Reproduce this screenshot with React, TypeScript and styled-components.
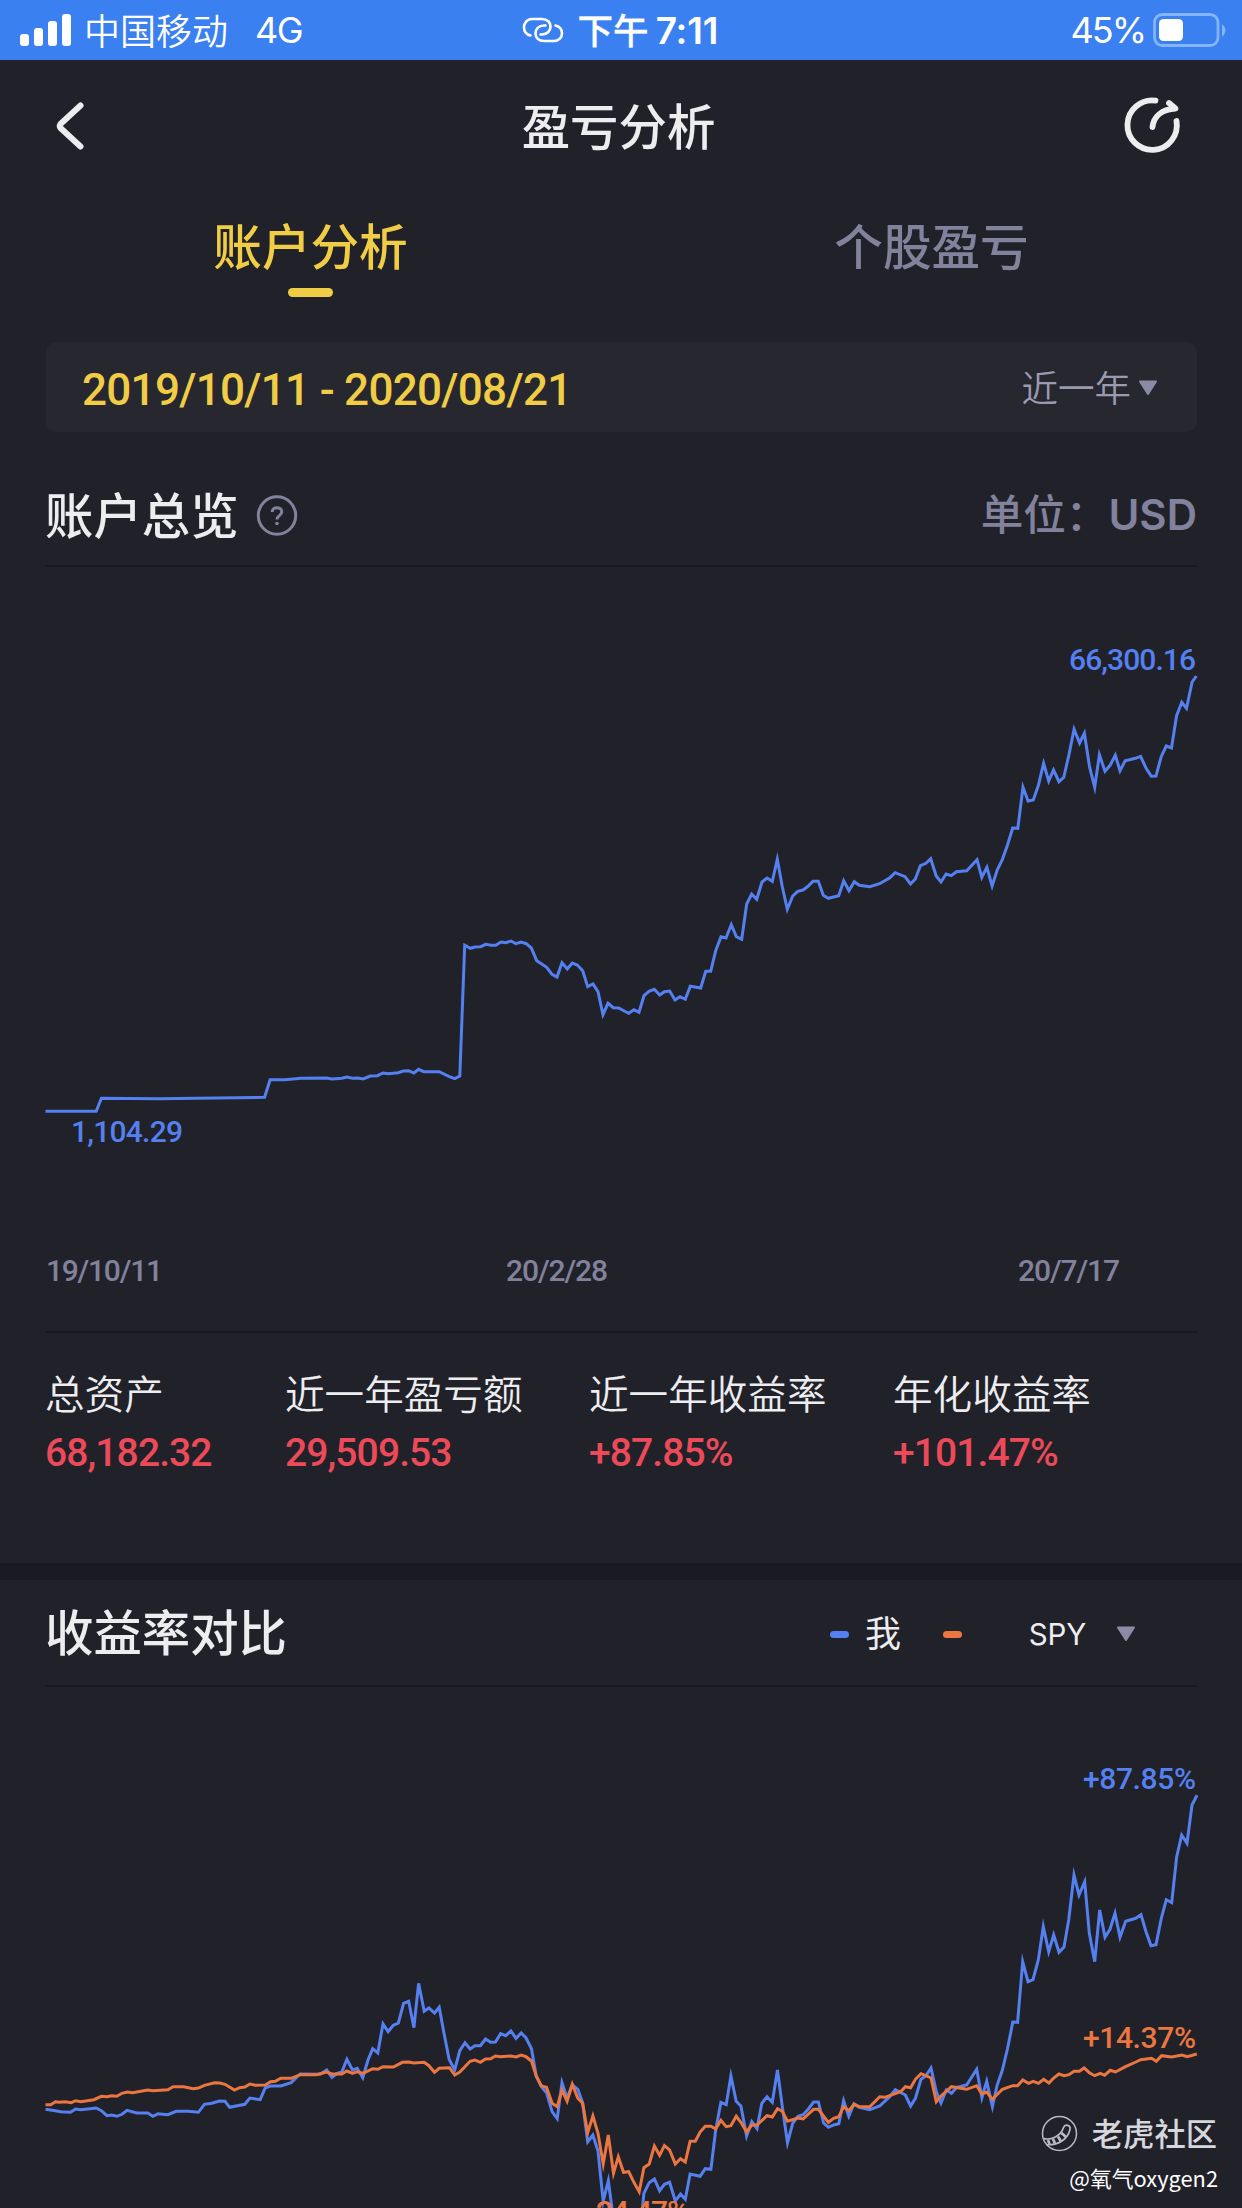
import React from "react";
import styled, { createGlobalStyle } from "styled-components";

const cjk = `"Noto Sans CJK SC", sans-serif`;
const uiFont = `Inter, ${cjk}`;
const numFont = `Roboto, ${cjk}`;

const color = {
  page: "#21212a",
  panel: "#272730",
  band: "#1a1a23",
  line: "#181820",
  text: "#ededf0",
  muted: "#82829c",
  accent: "#f0cd45",
  blue: "#5580f0",
  orange: "#ec7640",
  red: "#ec4a58",
  status: "#3a80f1",
};

const GlobalStyle = createGlobalStyle`
  * { box-sizing: border-box; }
  body { margin: 0; background: ${color.page}; }
`;

const Screen = styled.main`
  position: relative;
  width: 1242px;
  height: 2208px;
  overflow: hidden;
  display: flex;
  flex-direction: column;
  background: ${color.page};
  color: ${color.text};
  font-family: ${uiFont};
  white-space: nowrap;
`;

const StatusBar = styled.header`
  display: grid;
  grid-template-columns: 1fr auto 1fr;
  align-items: center;
  height: 60px;
  padding: 0 16px 0 20px;
  background: ${color.status};
  color: #fff;
  font-size: 36px;
  line-height: 60px;
`;

const StatusGroup = styled.div<{ $end?: boolean }>`
  display: flex;
  align-items: center;
  justify-content: ${(p) => (p.$end ? "flex-end" : "flex-start")};
  height: 60px;
`;

const Signal = styled.div`
  display: flex;
  align-items: flex-end;
  gap: 5px;
  width: 52px;
  height: 32px;
  margin-right: 12px;
`;

const SignalBar = styled.i<{ $h: number }>`
  width: 9px;
  height: ${(p) => p.$h}px;
  border-radius: 3px;
  background: #fff;
`;

const Carrier = styled.span`
  font: 350 36px/58px ${cjk};
  height: 60px;
  margin-right: 27px;
`;

const Network = styled.span`
  font-size: 36px;
  line-height: 62px;
  letter-spacing: -1.5px;
`;

const Clock = styled.span`
  display: flex;
  gap: 7px;
  margin: 0 6px 0 14px;
  height: 60px;
  font: 500 35.5px/58px ${cjk};
  -webkit-text-stroke: 0.3px currentColor;
  b {
    font: 600 37px/62px Inter, sans-serif;
    letter-spacing: -0.1px;
    -webkit-text-stroke: 0;
  }
`;

const Percent = styled.span`
  font-size: 36px;
  line-height: 62px;
  letter-spacing: -2px;
  margin-right: 7px;
`;

const Nav = styled.nav`
  display: grid;
  grid-template-columns: 60px 1fr 60px;
  align-items: center;
  height: 132px;
  padding: 0 59px 0 52px;
`;

const Title = styled.h1`
  margin: 0 0 5px 2px;
  text-align: center;
  font: 500 48.4px/70px ${cjk};
`;

const Tabs = styled.div`
  display: grid;
  grid-template-columns: 1fr 1fr;
  height: 150px;
  padding-top: 17px;
`;

const Tab = styled.div<{ $active?: boolean }>`
  display: flex;
  flex-direction: column;
  align-items: center;
  font: 500 48.6px/70px ${cjk};
  color: ${(p) => (p.$active ? color.accent : color.muted)};
  &::after {
    content: "";
    width: 45px;
    height: 9px;
    margin-top: 9px;
    border-radius: 5px;
    background: ${(p) => (p.$active ? color.accent : "transparent")};
  }
`;

const FilterBar = styled.div`
  display: flex;
  align-items: center;
  justify-content: space-between;
  height: 90px;
  margin: 0 45px 0 46px;
  padding: 0 39px 0 36px;
  border-radius: 10px;
  background: ${color.panel};
`;

const DateRange = styled.span`
  padding-top: 5px;
  font: 500 44px/60px ${numFont};
  letter-spacing: -0.7px;
  color: ${color.accent};
`;

const Period = styled.span`
  display: flex;
  align-items: center;
  gap: 7px;
  font: 350 36.5px/60px ${cjk};
  color: #9a9ab0;
  svg {
    margin-top: 2px;
  }
`;

const SectionHead = styled.div<{ $h: number; $pt?: number }>`
  display: flex;
  align-items: center;
  justify-content: space-between;
  height: ${(p) => p.$h}px;
  margin: 0 45px;
  padding-top: ${(p) => p.$pt ?? 0}px;
  border-bottom: 2px solid ${color.line};
`;

const Heading = styled.h2`
  display: flex;
  align-items: center;
  gap: 17px;
  margin: 0;
  font: 500 48.4px/70px ${cjk};
  span {
    padding-bottom: 6px;
  }
`;

const Unit = styled.span`
  padding-bottom: 5px;
  font: 500 42.6px/60px ${cjk};
  color: ${color.muted};
  b {
    font: 600 42px/60px Inter, sans-serif;
  }
`;

const ChartSvg = styled.svg`
  display: block;
  flex: none;
  font-family: ${numFont};
  font-size: 30px;
  font-weight: 500;
  font-stretch: 88%;
`;

const Line = styled.polyline<{ $c: string }>`
  fill: none;
  stroke: ${(p) => p.$c};
  stroke-width: 3;
  stroke-linejoin: miter;
  stroke-miterlimit: 6;
`;

const Stats = styled.dl`
  display: grid;
  grid-template-columns: 240px 304px 304px 1fr;
  height: 232px;
  margin: 0 45px;
  padding-top: 29px;
  border-top: 2px solid ${color.line};
`;

const StatLabel = styled.dt`
  font: 350 39.6px/60px ${cjk};
`;

const StatValue = styled.dd`
  margin: 0;
  padding-top: 2px;
  font: 500 39px/58px ${numFont};
  letter-spacing: -0.9px;
  color: ${color.red};
`;

const Band = styled.div`
  height: 17px;
  background: ${color.band};
`;

const Legend = styled.div`
  display: flex;
  align-items: center;
  padding: 3px 61px 0 0;
`;

const Dash = styled.i<{ $c: string }>`
  width: 19px;
  height: 7px;
  border-radius: 4px;
  background: ${(p) => p.$c};
`;

const LegendText = styled.span<{ $l: number; $r: number; $size: number }>`
  margin: 0 ${(p) => p.$r}px 0 ${(p) => p.$l}px;
  font-size: ${(p) => p.$size}px;
  line-height: 50px;
  letter-spacing: -0.2px;
`;

const Watermark = styled.div`
  position: absolute;
  right: 24px;
  bottom: 11px;
  display: flex;
  flex-direction: column;
  align-items: flex-end;
  color: #d6d7dc;
`;

const Brand = styled.div`
  display: flex;
  align-items: center;
  gap: 14px;
  padding-right: 1px;
  font: 500 31.3px/46px ${cjk};
  margin-bottom: 3px;
`;

const Author = styled.div`
  font: 400 21.8px/38px ${cjk};
  color: #fff;
`;

/* Converts a block of packed "x,y" pairs to canvas points. */
const block = (ox: number, oy: number, sx: number, packed: string) =>
  packed
    .trim()
    .split(/\s+/)
    .map((pair) => {
      const [x, y] = pair.split(",").map(Number);
      return `${(ox + x / sx).toFixed(1)},${(oy + y / 3).toFixed(1)}`;
    })
    .join(" ");

const assets = [
  block(0, 900, 2.525, `115,634 243,634 256,595 400,596 500,595 668,592 682,539 720,539 760,535 825,534 838,537 863,535 876,531 890,535
  903,534 917,537 935,528 953,527 967,519 980,521 1006,518 1018,513 1032,512 1045,519 1057,508 1070,515 1109,515 1133,529 1148,536 1161,528`),
  block(440, 820, 3, `74,376 91,385 105,381 122,380 137,373 153,376 167,376 183,366 197,368 213,363 228,371 243,366 259,371 274,384 290,422
  305,432 320,442 336,463 351,471 366,428 382,447 397,429 412,435 428,452 443,500 459,492 474,515 489,584 504,550 520,563 536,564 551,572
  566,580 582,569 597,577 612,527 627,514 643,508 659,525 673,515 689,513 705,540 720,530 736,538 751,499 782,504 797,454 812,454 827,392
  843,350 858,354 874,314 889,350 905,358 920,252 935,222 950,238 966,186 981,174 997,184 1012,118 1027,200 1042,268 1058,228 1073,214
  1089,210 1104,199 1119,184 1135,184 1150,226 1165,235 1196,227 1211,182 1227,212 1243,185 1258,196 1289,200`),
  block(621, 640, 2.525, `653,731 679,713 692,698 717,710 731,732 743,717 756,677 770,670 782,656 796,708 808,726 821,702 834,707 847,695
  873,692 899,659 911,712 924,682 937,738 950,690 963,658 976,615 989,564 1002,565 1015,442 1028,483 1041,480 1054,436 1067,370 1080,423
  1092,390 1106,425 1118,412 1131,345 1144,268 1158,309 1170,280 1183,380 1196,442 1208,344 1222,394 1235,376 1248,346 1260,392 1273,362
  1299,355 1312,349 1326,385 1339,409 1351,408 1364,350 1377,318 1390,324 1403,227 1416,187 1428,205 1442,126 1453,108`),
].join(" ");

const mine = [
  block(0, 1940, 2.525, `115,508 140,512 153,515 178,517 191,507 204,509 243,504 256,512 270,527 282,525 295,529 308,523 321,511 345,519
  373,519 386,529 399,521 424,524 445,514 475,514 501,517 516,493 535,490 554,483 568,484 580,502 618,493 631,474 657,479 670,443 683,438
  709,438 735,428 758,402 808,403 825,390 838,412 850,401 863,396 876,358 890,390 902,385 916,413 929,361 941,326 954,339 967,252 980,275
  993,256 1006,249 1019,190 1032,184 1045,263 1057,130 1071,214 1083,204 1097,219 1109,202 1121,280 1134,358 1148,390 1161,332 1174,308
  1187,327 1199,317 1213,317 1226,297 1239,307 1251,306 1264,281 1277,287 1290,273 1303,295 1316,279 1328,293 1342,326 1354,408 1367,440
  1380,458 1394,515 1407,536 1419,428 1432,475 1445,434 1459,448 1471,488 1484,606 1497,585 1510,633 1523,784 1536,722 1548,830`),
  block(560, 1940, 2.299, `182,900 193,760 205,728 217,717 229,752 240,733 252,727 265,783 277,762 288,778 299,702 322,709 334,686 347,688
  358,570 370,487 382,494 393,408 405,484 416,498 429,588 441,545 453,566 464,490 476,470 488,487 500,390 511,500 523,608 535,550 547,529
  559,524 571,507 583,486 594,486 606,549 617,562 629,555 641,551 652,482 664,529 676,491 688,502 712,509 735,498 758,470 771,449 794,465
  806,498 817,475 830,418 841,408 853,384 865,455 876,489 888,450 900,460 912,442 935,435 958,388 970,473 981,424 994,500 1005,436
  1017,390 1029,325 1041,246 1052,247`),
  block(850, 1720, 3, `518,725 534,785 549,779 565,720 580,620 596,695 611,645 627,697 642,681 656,600 672,465 687,525 704,485 718,640
  734,725 749,570 765,652 780,628 795,580 810,652 827,604 857,595 873,584 888,635 903,677 918,674 934,595 949,539 965,548 980,410 995,345
  1011,370 1026,255 1041,226`),
].join(" ");

const spy = [
  block(0, 1940, 2.525, `115,494 128,494 140,485 150,487 165,485 180,488 191,482 204,485 237,479 256,469 270,470 282,467 295,469 308,460
  321,456 335,458 373,450 386,452 424,449 437,440 463,440 488,446 501,444 516,436 542,428 555,429 568,433 592,450 605,443 618,441 631,432
  645,436 670,435 683,425 695,424 709,415 735,415 758,404 799,404 825,396 838,402 863,402 876,393 890,400 902,395 916,400 941,386 954,388
  967,380 993,381 1016,367 1032,366 1045,369 1071,367 1083,377 1097,397 1109,385 1135,383 1148,405 1161,396 1187,364 1199,360 1213,367
  1226,357 1239,356 1251,348 1264,350 1290,348 1303,351 1316,345 1328,350 1342,363 1354,408 1367,438 1380,442 1394,490 1407,500 1419,450
  1432,484 1445,433 1459,475 1471,490 1484,578 1497,528 1510,580 1523,672`),
  block(560, 1940, 2.299, `111,585 123,700 134,650 146,697 158,695 170,727 182,755 193,683 205,672 217,618 229,646 240,617 252,630 265,672
  277,656 288,666 299,604 311,604 322,576 334,559 347,559 358,567 370,541 382,560 393,557 405,529 416,547 429,576 441,555 453,555 476,527
  488,531 500,506 511,514 523,544 547,534 559,537 583,508 594,508 617,547 629,535 641,530 652,500 664,512 676,493 688,500 712,500 735,470
  747,472 783,455 794,440 806,443 817,418 830,401 841,407 853,414 865,485 876,468 900,440 935,448 958,437 970,462 981,456 994,478
  1017,448 1041,437 1052,437 1064,420 1077,430 1088,424 1100,430 1112,418 1124,429 1135,414 1147,402 1159,407 1170,404 1182,394 1194,394
  1205,384 1217,398 1229,407 1242,400 1252,406 1265,391 1277,396 1300,380 1324,366 1335,359 1360,355 1371,364 1383,347 1406,351 1430,345
  1442,350 1464,342`),
].join(" ");

const stats = [
  ["总资产", "68,182.32"],
  ["近一年盈亏额", "29,509.53"],
  ["近一年收益率", "+87.85%"],
  ["年化收益率", "+101.47%"],
];

const Triangle = () => (
  <svg width="20" height="16" viewBox="0 0 20 16">
    <path d="M2 1.5H18L10 14Z" fill="#8b8ba6" stroke="#8b8ba6" strokeWidth="2" strokeLinejoin="round" />
  </svg>
);

export default function App() {
  return (
    <Screen>
      <GlobalStyle />
      <StatusBar>
        <StatusGroup>
          <Signal>
            {[12, 18, 25, 32].map((h) => (
              <SignalBar key={h} $h={h} />
            ))}
          </Signal>
          <Carrier>中国移动</Carrier>
          <Network>4G</Network>
        </StatusGroup>
        <StatusGroup>
          <svg width="42" height="26" viewBox="0 0 42 26" fill="none" stroke="#fff" strokeWidth="2.6" strokeLinecap="round">
            <path d="M8.500 18.500C4.500 17.500 2 14.300 2 10.200S5 2 10 2H20C25.500 2 28.500 5.500 28.500 9.500S25.500 17.500 20 17.500H18.500" />
            <path d="M33.500 8.500C37.500 9.500 40 12.200 40 16.300S37 24 32 24H22C16.500 24 13.500 20.700 13.500 16.500S16.500 8.500 22 8.500H23.500" />
          </svg>
          <Clock>
            下午<b>7:11</b>
          </Clock>
        </StatusGroup>
        <StatusGroup $end>
          <Percent>45%</Percent>
          <svg width="74" height="34" viewBox="0 0 74 34">
            <rect x="2.500" y="1.500" width="63.500" height="31" rx="8" fill="none" stroke="#84b4fa" strokeWidth="2.800" />
            <rect x="7" y="6" width="24" height="22" rx="4.500" fill="#fff" />
            <path d="M70 11.500C74.500 13.500 74.500 21.500 70 23.500Z" fill="#84b4fa" />
          </svg>
        </StatusGroup>
      </StatusBar>

      <Nav>
        <svg width="40" height="56" viewBox="0 0 40 56" fill="none" stroke={color.text} strokeWidth="6" strokeLinecap="round" strokeLinejoin="round">
          <path d="M28.500 7.500L8.500 26Q7 28 8.500 30L28.500 48.500" />
        </svg>
        <Title>盈亏分析</Title>
        <svg width="60" height="60" viewBox="0 0 60 60" fill="none" stroke={color.text} strokeWidth="5.800" strokeLinecap="round" strokeLinejoin="round">
          <path d="M32.500 4.700A24.700 24.700 0 1 0 53.500 25" />
          <path d="M29.500 31C30.500 21 38 13.500 52.500 12.500L46 7" />
        </svg>
      </Nav>

      <Tabs>
        <Tab $active>账户分析</Tab>
        <Tab>个股盈亏</Tab>
      </Tabs>

      <FilterBar>
        <DateRange>2019/10/11 - 2020/08/21</DateRange>
        <Period>
          近一年
          <Triangle />
        </Period>
      </FilterBar>

      <SectionHead $h={135} $pt={34}>
        <Heading>
          <span>账户总览</span>
          <svg width="42" height="42" viewBox="0 0 42 42" fill="none" stroke={color.muted} strokeWidth="3">
            <circle cx="21" cy="20.500" r="18.700" />
            <path d="M16.200 17C16.200 11.300 25.800 11.300 25.800 17C25.800 20.500 21 20.300 21 24.500" />
            <circle cx="21" cy="28.500" r="1.800" fill={color.muted} stroke="none" />
          </svg>
        </Heading>
        <Unit>
          单位：<b>USD</b>
        </Unit>
      </SectionHead>

      <ChartSvg width="1242" height="764" viewBox="0 567 1242 764">
        <Line $c={color.blue} points={assets} />
        <g fill={color.blue}>
          <text x="1069" y="670" textLength="127">66,300.16</text>
          <text x="71" y="1142" textLength="112">1,104.29</text>
        </g>
        <g fill={color.muted}>
          <text x="46" y="1281" textLength="117">19/10/11</text>
          <text x="506" y="1281" textLength="102">20/2/28</text>
          <text x="1018" y="1281" textLength="102">20/7/17</text>
        </g>
      </ChartSvg>

      <Stats>
        {stats.map(([label, value]) => (
          <div key={label}>
            <StatLabel>{label}</StatLabel>
            <StatValue>{value}</StatValue>
          </div>
        ))}
      </Stats>

      <Band />

      <SectionHead $h={107}>
        <Heading>
          <span>收益率对比</span>
        </Heading>
        <Legend>
          <Dash $c={color.blue} />
          <LegendText $l={16} $r={42} $size={36}>我</LegendText>
          <Dash $c={color.orange} />
          <LegendText $l={67} $r={30} $size={29.5}>SPY</LegendText>
          <Triangle />
        </Legend>
      </SectionHead>

      <ChartSvg width="1242" height="521" viewBox="0 1687 1242 521">
        <Line $c={color.blue} points={mine} />
        <Line $c={color.orange} points={spy} />
        <text x="1083" y="1789" textLength="113" fill={color.blue}>+87.85%</text>
        <text x="1083" y="2048" textLength="113" fill={color.orange}>+14.37%</text>
        <text x="587" y="2222" textLength="102" fill={color.orange}>-24.47%</text>
      </ChartSvg>

      <Watermark>
        <Brand>
          <svg width="37" height="37" viewBox="0 0 37 37" fill="none" stroke="#b9bac2" strokeWidth="1.500">
            <circle cx="18.500" cy="18.500" r="17" />
            <path d="M2.500 23.500C10 25.500 20 21 22.500 12.500C24 8.500 30 10 29 14.500C26.500 25 16 31 5 29.500" strokeWidth="1.700" />
            <path d="M7 25L8.500 29M12 24L14 28.500M17 21.500L20 26.500M20.500 18L25 22" strokeWidth="2.800" />
          </svg>
          老虎社区
        </Brand>
        <Author>@氧气oxygen2</Author>
      </Watermark>
    </Screen>
  );
}
